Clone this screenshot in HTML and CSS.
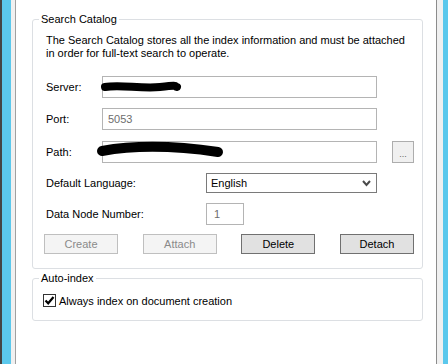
FILE: index.html
```html
<!DOCTYPE html>
<html lang="en">
<head>
<meta charset="UTF-8">
<title>Search Catalog</title>
<link rel="stylesheet" href="styles.css">
</head>
<body>
<div class="frame">
<div class="chrome">
<div class="panel">

<fieldset class="group catalog">
<legend>Search Catalog</legend>
<p class="intro">The Search Catalog stores all the index information and must be attached in order for full-text search to operate.</p>

<div class="row">
<label class="lbl">Server:</label>
<div class="field wide">
<svg class="scribble" width="90" height="22" viewBox="0 0 90 22"><path d="M5 10 C 20 7, 40 12, 60 10 S 74 9, 77 10" stroke="#000" stroke-width="8" stroke-linecap="round" fill="none"/></svg>
</div>
</div>

<div class="row row-port">
<label class="lbl">Port:</label>
<div class="field wide disabled">5053</div>
</div>

<div class="row row-path">
<label class="lbl">Path:</label>
<div class="field wide">
<svg class="scribble" width="130" height="22" viewBox="0 0 130 22"><path d="M2 9 C 30 4, 70 3, 118 10" stroke="#000" stroke-width="10" stroke-linecap="round" fill="none"/></svg>
</div>
<button class="browse">...</button>
</div>

<div class="row row-lang">
<label class="lbl lbl-long">Default Language:</label>
<div class="select">English
<svg class="chevron" width="9" height="7" viewBox="0 0 9 7"><path d="M1 1 L4.5 5 L8 1" stroke="#4a4a4a" stroke-width="2" fill="none"/></svg>
</div>
</div>

<div class="row row-node">
<label class="lbl lbl-long">Data Node Number:</label>
<div class="field small disabled">1</div>
</div>

<div class="buttons">
<button class="btn" disabled>Create</button>
<button class="btn" disabled>Attach</button>
<button class="btn">Delete</button>
<button class="btn">Detach</button>
</div>
</fieldset>

<fieldset class="group auto">
<legend>Auto-index</legend>
<div class="check-row">
<span class="checkbox"><svg width="11" height="11" viewBox="0 0 11 11"><path d="M1.5 5.5 L4.2 8.3 L9.5 2" stroke="#000" stroke-width="2.2" fill="none"/></svg></span>
<span>Always index on document creation</span>
</div>
</fieldset>

</div>
</div>
</div>
</body>
</html>
```

FILE: styles.css
```css
body {
  margin: 0;
  font-family: "Liberation Sans", Arial, sans-serif;
  font-size: 11px;
  color: #000;
}

.frame {
  display: flex;
  width: 448px;
  height: 364px;
  box-sizing: border-box;
  background-color: #5bc8ec;
  border-left: 2px solid #454545;
  padding: 0 5px 0 9px;
}

.chrome {
  flex: 1;
  display: flex;
  background-color: #f0f0f0;
  padding: 0 6px 0 4px;
}

.panel {
  flex: 1;
  background-color: #fff;
  border-left: 1px solid #a0a0a0;
  border-right: 1px solid #8c8c8c;
  padding: 12px 13px 0 16px;
}

/* group boxes */
.group {
  margin: 0;
  border: 1px solid #dcdfe3;
  border-radius: 3px;
  padding: 0 8px 14px 13px;
}

.group legend {
  padding: 0 2px;
  margin-left: -7px;
  line-height: 15px;
}

.intro {
  margin: 7px 0 0;
  line-height: 13px;
}

.row {
  display: flex;
  align-items: center;
  height: 22px;
  margin-top: 16px;
}

.row-port { margin-top: 10px; }
.row-path { margin-top: 11px; }
.row-lang { margin-top: 10px; height: 20px; }
.row-node { margin-top: 10px; }

.lbl {
  width: 56px;
  flex-shrink: 0;
}

.lbl-long {
  width: 160px;
}

.field {
  position: relative;
  height: 22px;
  box-sizing: border-box;
  border: 1px solid #b4b4b4;
  padding: 0 5px;
  line-height: 20px;
}

.wide { width: 275px; }
.small { width: 38px; padding-left: 7px; }

.disabled { color: #6d6d6d; }

.scribble {
  position: absolute;
  left: -3px;
  top: 0;
  overflow: visible;
}

.browse {
  width: 22px;
  height: 22px;
  margin-left: 15px;
  padding: 0;
  border: 1px solid #adadad;
  background-color: #f0f0f0;
  font: inherit;
  font-size: 9px;
  color: #666;
  line-height: 24px;
}

.select {
  position: relative;
  width: 171px;
  height: 20px;
  box-sizing: border-box;
  border: 1px solid #7a7a7a;
  padding: 0 4px;
  line-height: 18px;
}

.chevron {
  position: absolute;
  right: 5px;
  top: 6px;
}

.buttons {
  display: flex;
  justify-content: space-between;
  width: 370px;
  margin: 9px 0 0 -2px;
}

.btn {
  width: 74px;
  height: 20px;
  padding: 0;
  border: 1px solid #707070;
  background-color: #e1e1e1;
  font: inherit;
  color: #000;
}

.btn:disabled {
  border-color: #bfbfbf;
  background-color: #f4f4f4;
  color: #8a8a8a;
}

.auto {
  margin-top: 2px;
  padding-bottom: 12px;
}

.check-row {
  display: flex;
  align-items: center;
  gap: 3px;
  margin: 7px 0 0 -3px;
  height: 15px;
}

.checkbox {
  display: flex;
  align-items: center;
  justify-content: center;
  width: 13px;
  height: 13px;
  box-sizing: border-box;
  border: 1px solid #333;
  background-color: #fff;
}
```
